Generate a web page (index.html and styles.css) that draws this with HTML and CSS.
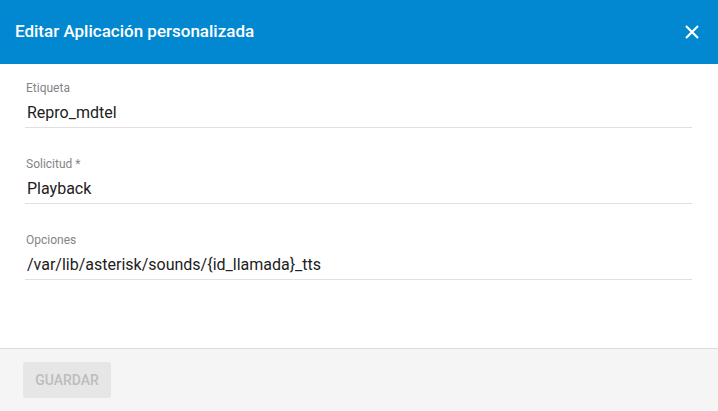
FILE: index.html
```html
<!DOCTYPE html>
<html lang="es">
<head>
<meta charset="utf-8">
<title>Editar Aplicación personalizada</title>
<link rel="stylesheet" href="styles.css">
</head>
<body>
<div class="dialog">
  <header class="dialog-header">
    <h1 class="dialog-title">Editar Aplicación personalizada</h1>
    <button class="close-btn" aria-label="Cerrar">
      <svg width="14" height="14" viewBox="0 0 14 14"><path d="M1 1L13 13M13 1L1 13" stroke="#fff" stroke-width="2.2" fill="none"/></svg>
    </button>
  </header>
  <main class="dialog-body">
    <div class="field">
      <label class="field-label">Etiqueta</label>
      <div class="field-value">Repro_mdtel</div>
    </div>
    <div class="field">
      <label class="field-label">Solicitud *</label>
      <div class="field-value">Playback</div>
    </div>
    <div class="field">
      <label class="field-label">Opciones</label>
      <div class="field-value">/var/lib/asterisk/sounds/{id_llamada}_tts</div>
    </div>
  </main>
  <footer class="dialog-footer">
    <button class="save-btn" disabled>GUARDAR</button>
  </footer>
</div>
</body>
</html>
```
FILE: styles.css
```css
html, body {
  margin: 0;
  padding: 0;
  background: #fff;
}
body {
  font-family: Roboto, "Liberation Sans", Arial, sans-serif;
  width: 718px;
  height: 411px;
  overflow: hidden;
}
.dialog {
  display: flex;
  flex-direction: column;
  height: 411px;
}
.dialog-header {
  height: 64px;
  background: #0288d1;
  display: flex;
  align-items: center;
  justify-content: space-between;
  padding: 0 14px 0 15px;
  box-sizing: border-box;
}
.dialog-title {
  margin: 0;
  font-size: 17px;
  font-weight: 500;
  color: #fff;
  line-height: 24px;
  padding-bottom: 2px;
}
.close-btn {
  background: none;
  border: 0;
  padding: 0;
  width: 24px;
  height: 24px;
  display: flex;
  align-items: center;
  justify-content: center;
  cursor: pointer;
}
.dialog-body {
  flex: 1;
  padding: 16px 26px 0 25px;
  display: flex;
  flex-direction: column;
  gap: 28px;
}
.field {
  display: flex;
  flex-direction: column;
  border-bottom: 1px solid #e0e0e0;
}
.field-label {
  font-size: 12px;
  line-height: 16px;
  color: #858585;
  padding-left: 1px;
}
.field-value {
  margin-top: 5px;
  font-size: 16px;
  line-height: 24px;
  color: #212121;
  padding-left: 2px;
  padding-bottom: 2px;
}
.dialog-footer {
  height: 63px;
  box-sizing: border-box;
  border-top: 1px solid #dcdcdc;
  background: #f5f5f5;
  padding: 13px 23px;
}
.save-btn {
  width: 88px;
  height: 36px;
  border: 0;
  border-radius: 2px;
  background: #e6e6e6;
  color: #bdbdbd;
  font-family: Roboto, "Liberation Sans", Arial, sans-serif;
  font-size: 14px;
  font-weight: 500;
  padding: 0;
}
```
